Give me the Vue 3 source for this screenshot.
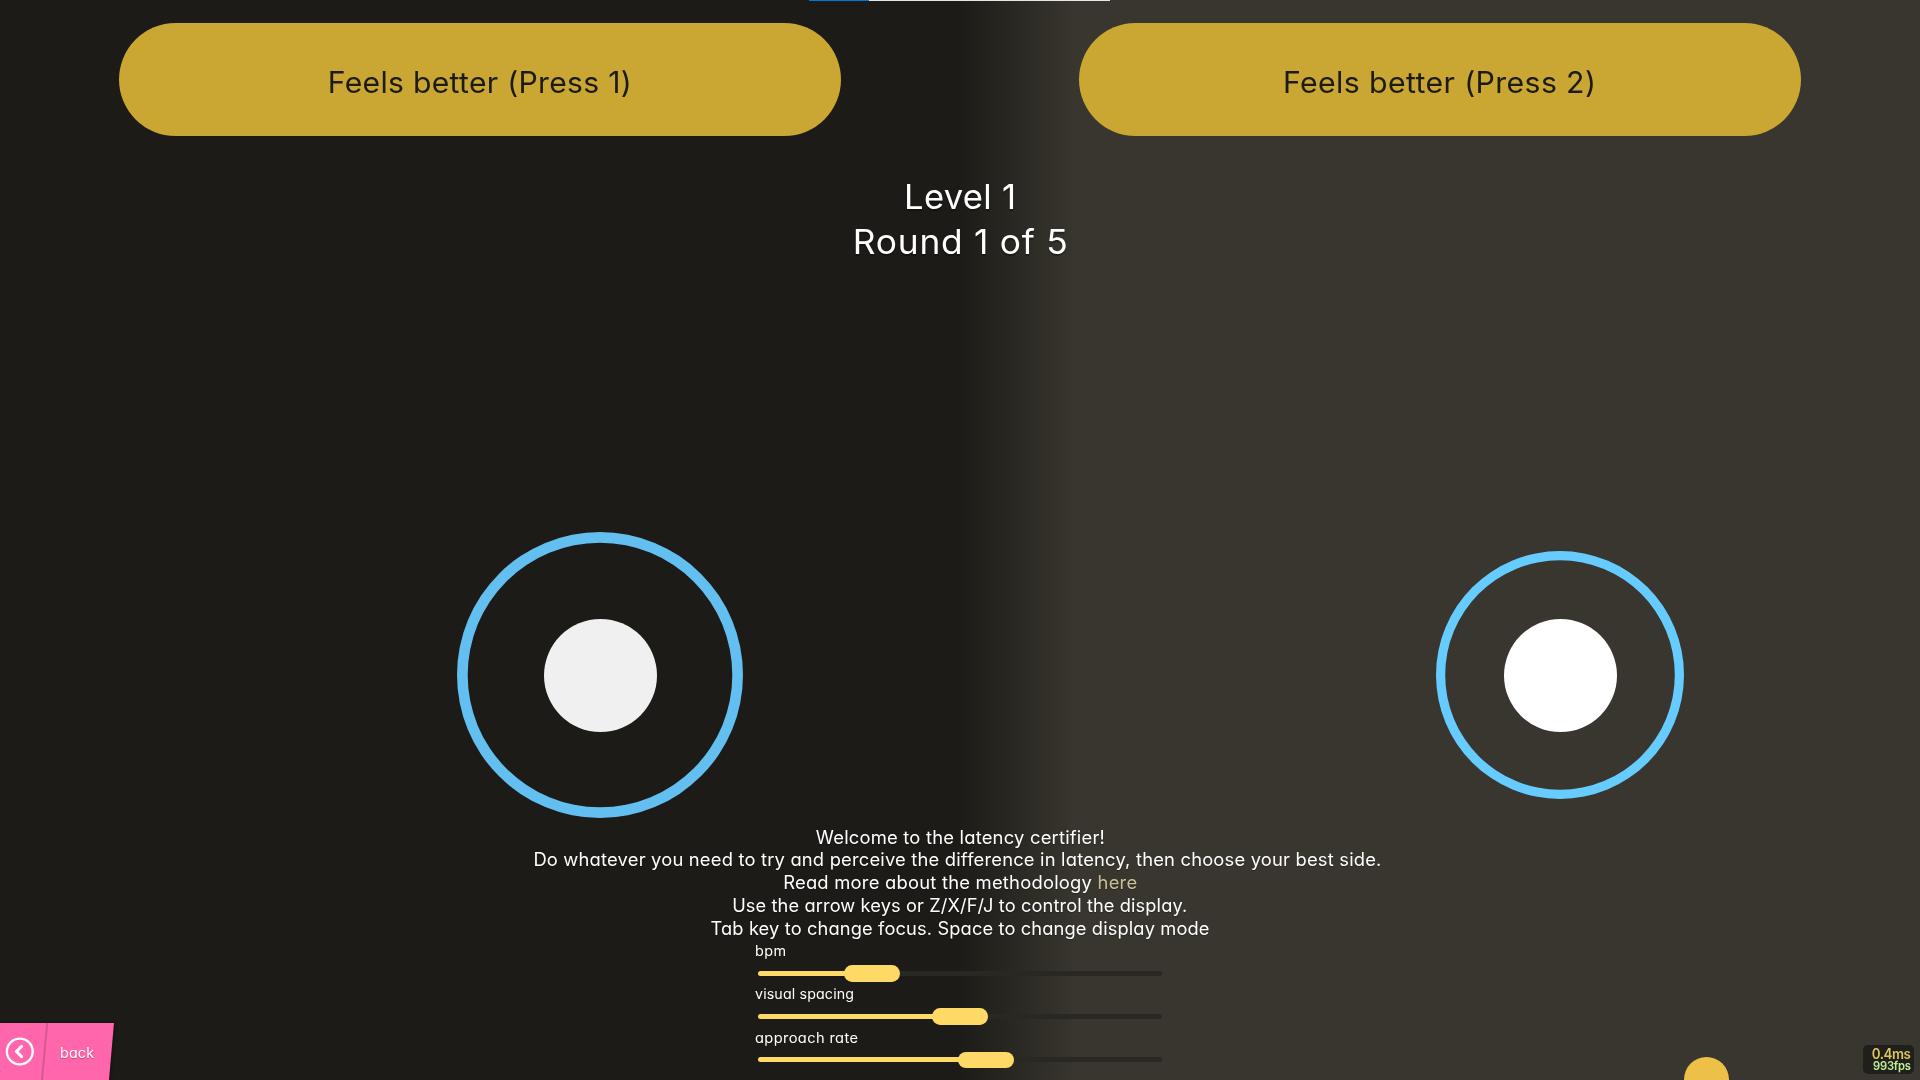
<script setup>
const buttons = ['Feels better (Press 1)', 'Feels better (Press 2)']
const buttonWidths = [304, 313]

const status = [
  { text: 'Level 1', width: 112 },
  { text: 'Round 1 of 5', width: 215 },
]

const lines = [
  { text: 'Welcome to the latency certifier!', width: 289 },
  { text: 'Do whatever you need to try and perceive the difference in latency, then choose your best side.', width: 848, shift: true },
  { text: 'Read more about the methodology ', link: 'here', width: 354 },
  { text: 'Use the arrow keys or Z/X/F/J to control the display.', width: 455 },
  { text: 'Tab key to change focus. Space to change display mode', width: 499 },
]

const sliders = [
  { label: 'bpm', width: 31, offset: 86.2 },
  { label: 'visual spacing', width: 99, offset: 174.5 },
  { label: 'approach rate', width: 103, offset: 199.8 },
]

// Fills the given width, half by widening the glyphs and half by tracking.
const vFit = {
  mounted(el, { value }) {
    const count = el.textContent.length
    const natural = el.getBoundingClientRect().width
    const stretch = 1 + (value / natural - 1) / 2
    const spacing = (value / stretch - natural) / (count - 1)
    el.style.letterSpacing = `${spacing}px`
    el.style.marginRight = `${-spacing}px`
    el.style.transform = `scaleX(${stretch})`
  },
}
</script>

<template>
  <main class="screen">
    <div class="load-bar"><div class="load-done"></div></div>

    <div class="ring ring-left"><div class="dot"></div></div>
    <div class="ring ring-right"><div class="dot"></div></div>
    <div class="cursor-ball"></div>

    <div class="choices">
      <div v-for="(b, i) in buttons" :key="b" class="side">
        <button class="choice"><span v-fit="buttonWidths[i]" class="fit">{{ b }}</span></button>
      </div>
    </div>

    <header class="status">
      <div v-for="s in status" :key="s.text"><span v-fit="s.width" class="fit">{{ s.text }}</span></div>
    </header>

    <section class="explain">
      <div v-for="l in lines" :key="l.text" class="line" :class="{ shifted: l.shift }">
        <span v-fit="l.width" class="fit">{{ l.text }}<a v-if="l.link">{{ l.link }}</a></span>
      </div>
    </section>

    <section class="settings">
      <div v-for="s in sliders" :key="s.label" class="setting">
        <div class="label"><span v-fit="s.width" class="fit">{{ s.label }}</span></div>
        <div class="slider">
          <div class="filled" :style="{ width: s.offset + 4 + 'px' }"></div>
          <div class="nub"></div>
          <div class="rest"></div>
        </div>
      </div>
    </section>

    <div class="back">
      <svg class="back-shape" width="124" height="60" viewBox="0 0 124 60">
        <path class="back-shadow" d="M0 3H114L109 60H0Z" />
        <path fill="#ff66ab" d="M0 3H114L109 60H0Z" />
        <path d="M47.2 3L42 60" stroke="#d95791" stroke-width="2" fill="none" />
        <circle cx="19.8" cy="31.5" r="12.9" stroke="#fff" stroke-width="2.3" fill="none" />
        <path d="M21.6 26.4L16.4 31.5L21.6 36.6" stroke="#fff" stroke-width="3" stroke-linecap="round" stroke-linejoin="round" fill="none" />
      </svg>
      <span class="back-text"><span v-fit="34" class="fit">back</span></span>
    </div>

    <div class="meter">
      <div class="ms"><span v-fit="39" class="fit">0.4ms</span></div>
      <div class="fps"><span v-fit="38" class="fit">993fps</span></div>
    </div>
  </main>
</template>

<style>
body {
  margin: 0;
  background: #1c1b17;
}
</style>

<style scoped>
.screen {
  position: relative;
  width: 1920px;
  height: 1080px;
  overflow: hidden;
  display: flex;
  flex-direction: column;
  align-items: center;
  background: linear-gradient(90deg, #1c1b17 958px, #38362e 1076px);
  font-family: Inter, "Noto Sans", sans-serif;
  font-feature-settings: "cv11" 1;
  color: #fff;
}
.fit {
  display: inline-block;
  white-space: pre;
}
.load-bar {
  position: absolute;
  top: 0;
  left: 809px;
  width: 301px;
  height: 1px;
  background: #e6e6e6;
}
.load-done {
  width: 60px;
  height: 1px;
  background: #0078d7;
}
.choices {
  display: flex;
  width: 100%;
  height: 113px;
  margin-top: 23.3px;
  flex: none;
}
.side {
  flex: 1;
  display: flex;
  justify-content: center;
}
.choice {
  width: 722px;
  height: 113px;
  padding: 4px 0 0;
  border: 0;
  border-radius: 56.5px;
  background: #caa633;
  color: #1c1b17;
  font: 400 29.5px Inter, "Noto Sans", sans-serif;
  font-feature-settings: "cv11" 1;
}
.status {
  margin-top: 37.7px;
  font-size: 34px;
  line-height: 45.3px;
  text-align: center;
  text-shadow: 0 2px 1px rgba(0, 0, 0, 0.3);
}
.explain {
  margin-top: 562.1px;
  font-size: 18px;
  line-height: 22.8px;
  text-align: center;
  text-shadow: 0 1px 1px rgba(0, 0, 0, 0.3);
}
.line {
  height: 22.8px;
}
.shifted {
  padding-right: 5px;
}
.line a {
  color: #ccbd94;
}
.settings {
  width: 404.5px;
  margin-top: 1.1px;
}
.setting {
  height: 43.3px;
}
.label {
  height: 18px;
  margin: 0 0 5.3px -2.5px;
  padding-top: 0.4px;
  box-sizing: border-box;
  font-size: 14px;
  line-height: 18px;
}
.label .fit,
.back-text .fit {
  transform-origin: left;
}
.slider {
  display: flex;
  align-items: center;
  width: 404.5px;
  height: 16.6px;
}
.filled {
  height: 5px;
  margin-right: -4px;
  border-radius: 2.5px 0 0 2.5px;
  background: #ffd966;
}
.nub {
  width: 56px;
  height: 16.4px;
  border-radius: 8.2px;
  background: #ffd966;
}
.rest {
  flex: 1;
  height: 5px;
  border-radius: 0 2.5px 2.5px 0;
  background: #292823;
}
.ring {
  position: absolute;
  box-sizing: border-box;
  display: flex;
  align-items: center;
  justify-content: center;
  border-radius: 50%;
}
.ring-left {
  left: 457px;
  top: 532px;
  width: 286px;
  height: 286px;
  box-shadow: inset 0 0 0 10.7px #62bff0;
}
.ring-right {
  left: 1436px;
  top: 551px;
  width: 248px;
  height: 248px;
  box-shadow: inset 0 0 0 9.2px #66ccff;
}
.dot {
  width: 113px;
  height: 113px;
  border-radius: 50%;
  background: #fff;
}
.ring-left .dot {
  background: #f0f0f0;
}
.cursor-ball {
  position: absolute;
  left: 1683.6px;
  top: 1056.5px;
  width: 45px;
  height: 45px;
  border-radius: 50%;
  background: #edc148;
}
.back {
  position: absolute;
  left: 0;
  bottom: 0;
  display: flex;
  width: 124px;
  height: 60px;
}
.back-shape {
  flex: none;
}
.back-shadow {
  fill: #000;
  filter: drop-shadow(0 0 2px rgba(0, 0, 0, 0.5));
}
.back-text {
  margin: 23.5px 0 0 -64.5px;
  font-size: 14px;
  line-height: 18px;
  text-shadow: 0 1px 1px rgba(0, 0, 0, 0.3);
}
.meter {
  position: absolute;
  left: 1863px;
  top: 1045px;
  box-sizing: border-box;
  width: 51px;
  height: 29px;
  padding-right: 3px;
  border-radius: 5px;
  background: #201f1b;
  text-align: right;
  font-weight: 600;
}
.meter .fit {
  transform-origin: right;
}
.ms {
  height: 15.4px;
  font-size: 14px;
  line-height: 17px;
  color: #dcc75f;
}
.fps {
  height: 12px;
  font-size: 11.5px;
  line-height: 12px;
  color: #bfee99;
}
</style>
